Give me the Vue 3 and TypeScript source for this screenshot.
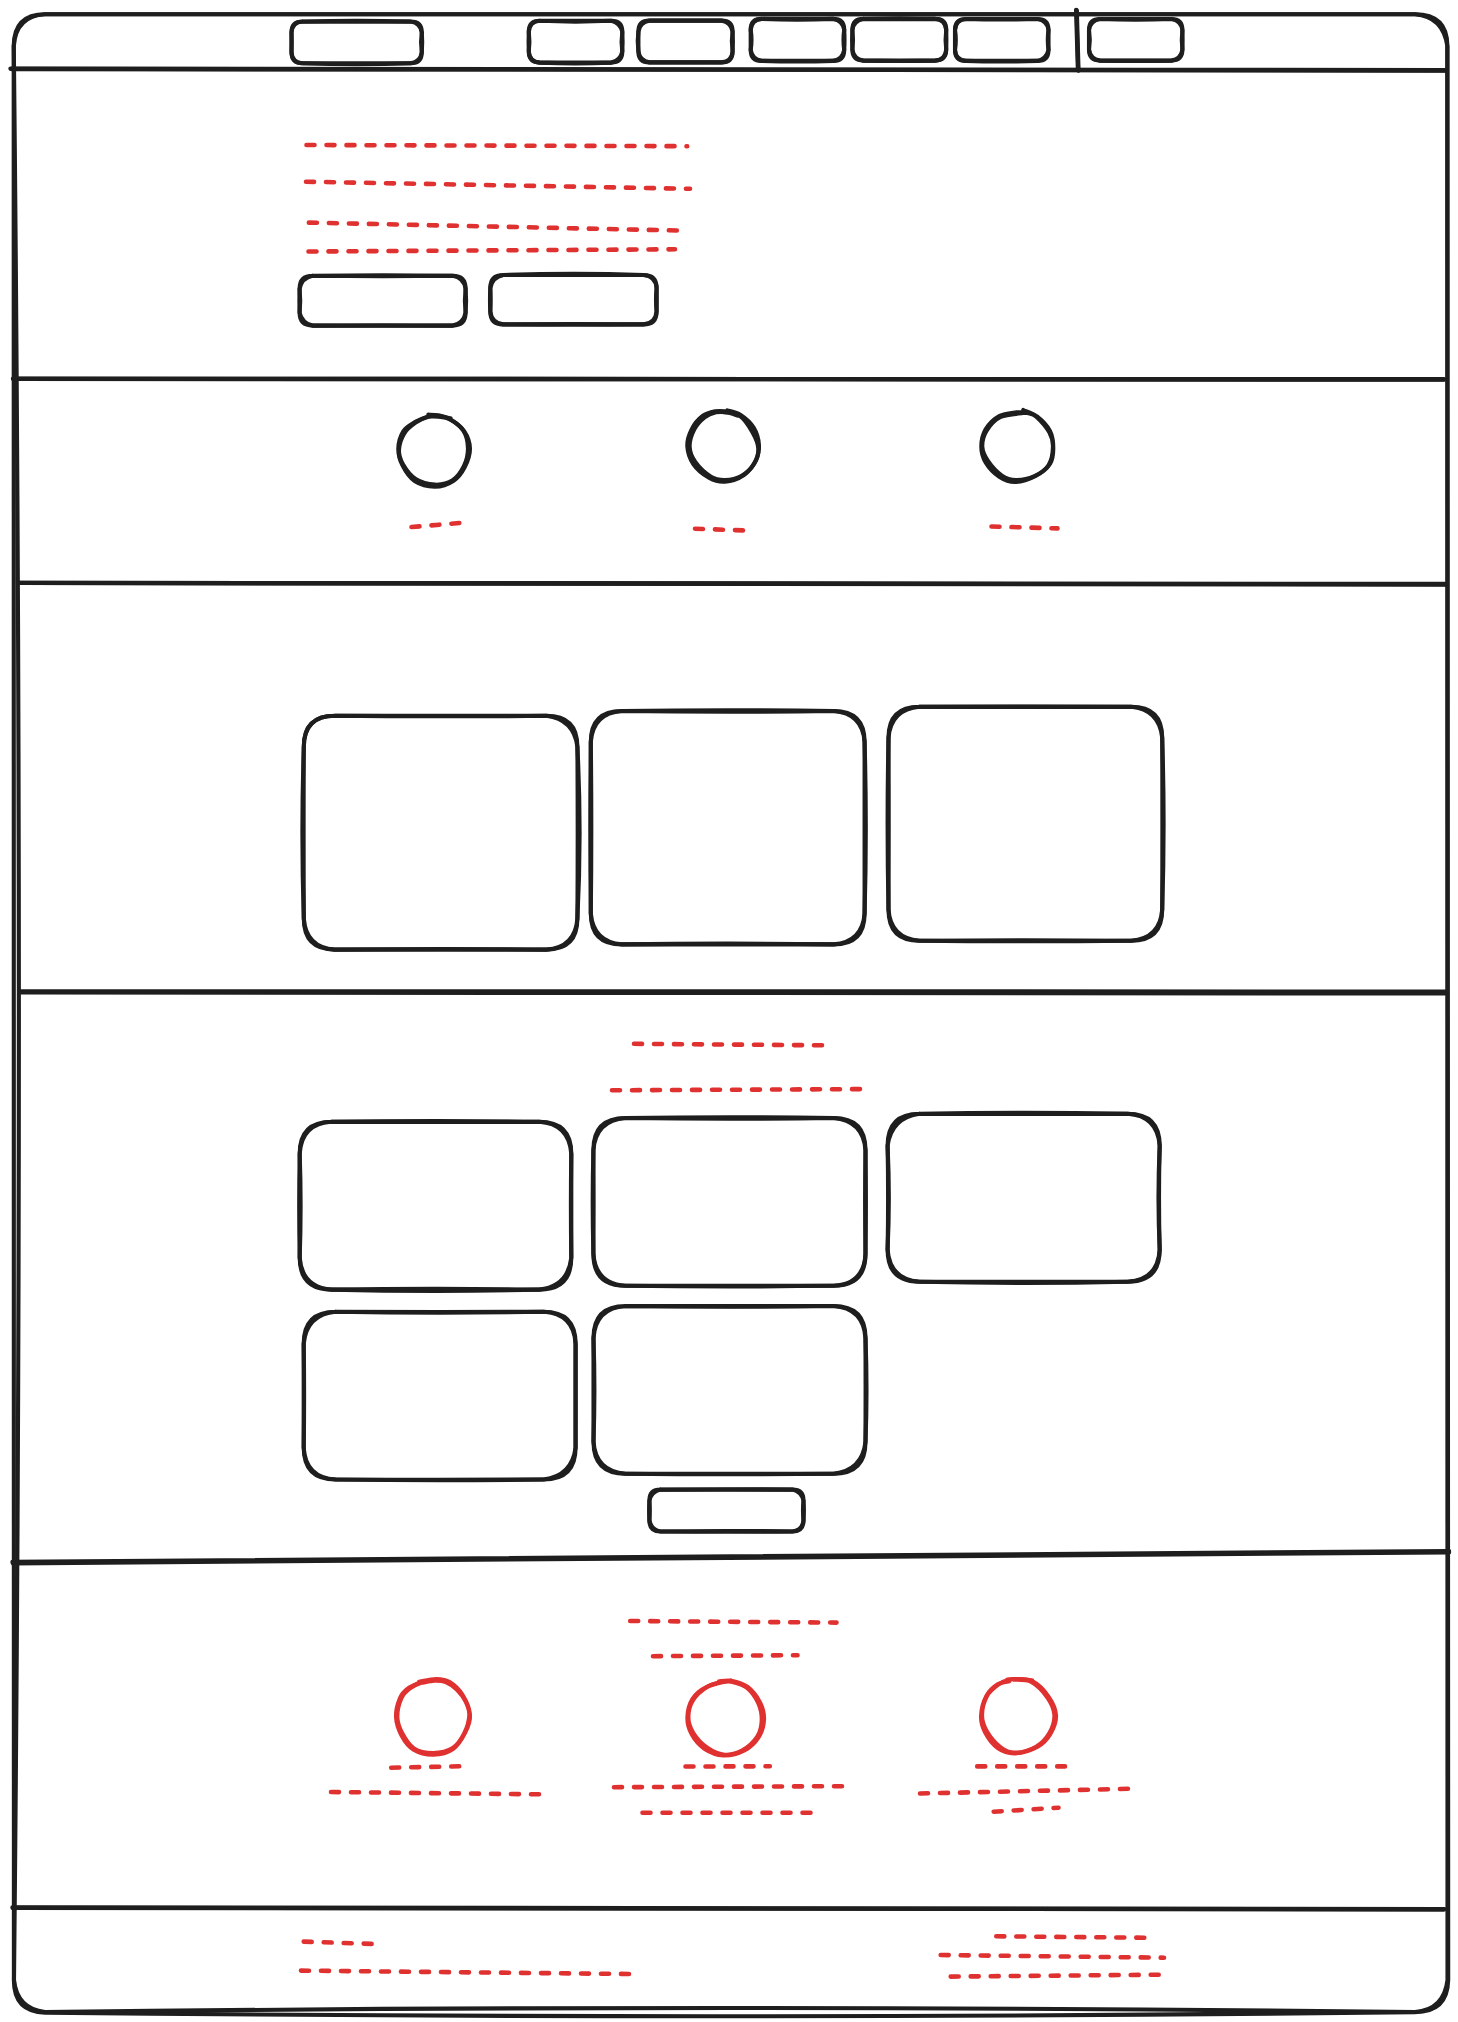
<script setup lang="ts">
type Point = [number, number]
type Line = [number, number, number, number]
type Sides = [number, number, number, number]

/** A rounded box drawn twice by hand; side bows are top, right, bottom, left (outward positive). */
interface Box {
  x1: number
  y1: number
  x2: number
  y2: number
  r: number
  first: Sides
  second: Sides
  /** How far the second stroke cuts inside each corner: tl, tr, br, bl. */
  corners: Sides
}

interface Circle {
  cx: number
  cy: number
  red?: boolean
  strokes: Point[][]
}

interface Section {
  name: string
  tag: string
  top: number
  height: number
  boxes: Box[]
  circles: Circle[]
  dashes: Line[]
  rules: string[]
}

const box = (
  x1: number, y1: number, x2: number, y2: number, r: number,
  first: Sides, second: Sides, corners: Sides,
): Box => ({ x1, y1, x2, y2, r, first, second, corners })

function boxPath(b: Box, bow: Sides, corners: Sides): string {
  const { x1, y1, x2, y2, r } = b
  const [t, e, s, w] = bow.map((n) => n * 2)
  const cut = corners.map((n) => n * 0.7)
  const mx = (x1 + x2) / 2
  const my = (y1 + y2) / 2
  return [
    `M${x1 + r} ${y1}`,
    `Q${mx} ${y1 - t} ${x2 - r} ${y1}`,
    `Q${x2 - cut[1]} ${y1 + cut[1]} ${x2} ${y1 + r}`,
    `Q${x2 + e} ${my} ${x2} ${y2 - r}`,
    `Q${x2 - cut[2]} ${y2 - cut[2]} ${x2 - r} ${y2}`,
    `Q${mx} ${y2 + s} ${x1 + r} ${y2}`,
    `Q${x1 + cut[3]} ${y2 - cut[3]} ${x1} ${y2 - r}`,
    `Q${x1 - w} ${my} ${x1} ${y1 + r}`,
    `Q${x1 + cut[0]} ${y1 + cut[0]} ${x1 + r} ${y1}`,
  ].join('')
}

/** Smooth open curve through points given in thirds of a pixel around a centre. */
function curvePath(c: Circle, raw: Point[]): string {
  const p = raw.map(([x, y]): Point => [c.cx + x / 3, c.cy + y / 3])
  let d = `M${p[0][0]} ${p[0][1]}`
  for (let i = 0; i < p.length - 1; i++) {
    const a = p[Math.max(i - 1, 0)]
    const b = p[i]
    const n = p[i + 1]
    const m = p[Math.min(i + 2, p.length - 1)]
    d += `C${b[0] + (n[0] - a[0]) / 6} ${b[1] + (n[1] - a[1]) / 6} ${n[0] - (m[0] - b[0]) / 6} ${n[1] - (m[1] - b[1]) / 6} ${n[0]} ${n[1]}`
  }
  return d
}

const sections: Section[] = [
  {
    name: 'nav', tag: 'header', top: 0, height: 69, circles: [], dashes: [],
    boxes: [
      box(291.5, 21.5, 421.8, 63.3, 11, [0.7, 0.4, 0.9, 0], [-0.2, -0.8, 0, -0.2], [1, 2, 2, 1]),
      box(528.8, 20.8, 622.3, 62.6, 11, [0, 0.3, 0, 0.2], [-0.8, -0.7, 0.8, -0.6], [1, 3, 3, 1]),
      box(638.4, 20.6, 732.6, 62.4, 11, [0, 0.3, 0, 0.7], [0, -0.8, 0, 0], [2, 2, 1, 2]),
      box(750.7, 18.9, 844.2, 60.9, 11, [0, 0.3, 0.6, 0], [-0.7, -0.7, 0, -0.8], [1, 2, 2, 2]),
      box(852.4, 18.9, 946.2, 60.6, 11, [0.5, 0.2, 0, 0.3], [-0.2, -0.6, 0.4, -0.6], [2, 1, 1, 2]),
      box(955, 19, 1048.5, 60.9, 11, [0, 0, 0.6, 0], [-0.5, -0.7, 0, -0.8], [1, 2, 3, 1]),
      box(1089, 19, 1182.4, 60.6, 11, [0, 0.2, 0, 0], [-0.6, -0.6, 0.3, -0.8], [2, 2, 2, 2]),
    ],
    rules: [
      'M10.5 68.6Q700 69.9 1446 70.6', 'M11.5 69Q700 69.3 1446 70.2',
      'M1076.2 10L1078 70.3', 'M1076.7 10.4L1078.4 70.5',
    ],
  },
  {
    name: 'hero', tag: 'section', top: 69, height: 310, circles: [],
    boxes: [
      box(299.6, 275.8, 465.6, 325.6, 13, [0.6, 0.5, 0.2, 0.2], [-0.4, -0.7, -0.2, -0.6], [3, 2.5, 3, 3.5]),
      box(490.3, 275, 656.6, 324.4, 13, [1.3, 0.2, 0.2, 0.3], [0, -0.6, -0.4, -0.4], [3, 1.5, 1.5, 2]),
    ],
    dashes: [
      [306.5, 145, 687.2, 146.2], [306, 181.7, 690, 188.8],
      [308.9, 222.6, 677, 230.5], [308.5, 251.5, 675, 249.3],
    ],
    rules: ['M13 378.7Q700 378.6 1444 379.6', 'M14 378.9Q700 379.2 1444 379.3'],
  },
  {
    name: 'features', tag: 'section', top: 379, height: 204, boxes: [],
    circles: [
      {
        cx: 434.3, cy: 450,
        strokes: [
          [[-18, -106], [12, -104], [47, -92], [90, -56], [107, -4], [91, 52], [58, 92], [2, 110], [-59, 93], [-95, 47], [-108, -4], [-93, -56], [-59, -83], [-23, -99]],
          [[-13, -101], [42, -94], [87, -58], [101, -5], [89, 48], [55, 91], [2, 104], [-56, 87], [-94, 43], [-106, 0], [-90, -50], [-56, -82], [-20, -99], [17, -101], [49, -95]],
        ],
      },
      {
        cx: 723.3, cy: 446,
        strokes: [
          [[12, -107], [52, -93], [91, -55], [107, -3], [97, 44], [62, 87], [5, 107], [-43, 95], [-90, 54], [-108, 0], [-95, -50], [-62, -90], [-24, -104], [10, -104]],
          [[-5, -102], [50, -90], [87, -42], [105, 7], [93, 53], [54, 90], [5, 102], [-37, 92], [-84, 48], [-101, 2], [-87, -50], [-56, -86], [-22, -101], [8, -101], [45, -91]],
        ],
      },
      {
        cx: 1017.3, cy: 446,
        strokes: [
          [[18, -108], [60, -88], [98, -45], [108, 7], [98, 54], [55, 90], [-6, 108], [-54, 92], [-95, 49], [-108, 2], [-95, -50], [-54, -90], [-2, -101], [25, -102]],
          [[32, -99], [57, -88], [96, -41], [107, 2], [94, 57], [50, 91], [-4, 102], [-46, 89], [-88, 45], [-105, 2], [-92, -46], [-50, -87], [18, -99], [32, -100]],
        ],
      },
    ],
    dashes: [
      [411.5, 527, 459.5, 523], [695, 528.7, 743.2, 530.4], [991.5, 526.5, 1057.5, 528.4],
    ],
    rules: ['M19 582.9Q700 583.2 1447 584.6', 'M19 582.9Q700 584 1447 584'],
  },
  {
    name: 'cards', tag: 'section', top: 583, height: 409, circles: [], dashes: [],
    boxes: [
      box(303.8, 715.8, 577.4, 949.6, 31, [0, 2.2, 0, 1.4], [-0.5, 0.3, -0.6, 0.2], [0, 5, 3, 3]),
      box(590.8, 711, 864.6, 944.4, 31, [0.8, 1.2, 0, 0.5], [-0.8, 0, -0.8, -0.5], [3, 3, 3, 3.5]),
      box(888.5, 706.7, 1162.2, 940.7, 31, [0.2, 1.4, 0.6, 0.9], [-0.2, 0.2, -0.4, -0.2], [3.5, 4, 3, 3]),
    ],
    rules: ['M21 991.4Q700 991 1447 991.6', 'M21 992.4Q700 993.4 1447 993.3'],
  },
  {
    name: 'gallery', tag: 'section', top: 992, height: 565, circles: [],
    boxes: [
      box(299.7, 1121.8, 571.3, 1289.6, 32, [0.7, 0, 1.3, 0.5], [-0.1, -0.4, -0.8, -0.9], [2.5, 3, 4.5, 3]),
      box(593.4, 1118, 865.5, 1285.8, 32, [0.7, 0.4, 0.6, 0.7], [-0.8, -0.4, 0, -0.2], [3.5, 3.5, 2, 3]),
      box(887.6, 1113.7, 1159.7, 1281.7, 32, [0.8, -0.7, 1.2, -0.5], [-0.3, -1.2, 0, -1.2], [5.5, 3, 2.5, 3]),
      box(303.7, 1311.8, 575.6, 1479.5, 32, [-0.2, 0.1, 0.8, 0], [-0.9, -0.1, 0.2, -0.4], [4, 2.5, 5, 2.5]),
      box(593.5, 1306, 865.5, 1473.7, 32, [-0.1, 1, 0.6, 0], [-0.8, 0.1, 0, -0.9], [3, 3, 4.5, 3]),
      box(649.4, 1489.6, 803.5, 1531.5, 11, [0.3, 0.4, 0.2, 0.3], [-0.1, -0.5, -0.5, -0.4], [3, 3, 1.5, 2.5]),
    ],
    dashes: [[634, 1043.8, 822, 1045.3], [612, 1090.3, 861, 1089.1]],
    rules: ['M12.5 1562L1449 1551.1', 'M13 1563.2Q700 1559 1449 1552.2'],
  },
  {
    name: 'team', tag: 'section', top: 1557, height: 351, boxes: [],
    circles: [
      {
        cx: 433, cy: 1716.7, red: true,
        strokes: [
          [[-42, -105], [10, -113], [50, -104], [89, -65], [111, -5], [97, 47], [60, 97], [1, 114], [-58, 99], [-94, 57], [-111, 0], [-99, -56], [-76, -84], [-36, -104]],
          [[-30, -102], [5, -108], [38, -104], [72, -81], [98, -45], [109, -5], [93, 51], [59, 94], [1, 109], [-57, 95], [-93, 48], [-107, 0], [-95, -55], [-70, -84], [-30, -104], [5, -109], [38, -108]],
        ],
      },
      {
        cx: 725.7, cy: 1717.7, red: true,
        strokes: [
          [[-20, -109], [17, -111], [65, -93], [103, -46], [115, 5], [99, 58], [56, 98], [-7, 113], [-64, 93], [-102, 50], [-115, 0], [-100, -56], [-58, -92], [15, -112]],
          [[-15, -107], [17, -108], [63, -90], [97, -45], [108, 7], [95, 56], [50, 98], [-2, 111], [-54, 91], [-97, 46], [-112, -3], [-97, -54], [-55, -93], [-10, -109]],
        ],
      },
      {
        cx: 1018.7, cy: 1716, red: true,
        strokes: [
          [[-34, -109], [-10, -111], [42, -104], [89, -59], [112, -3], [95, 54], [57, 92], [-11, 112], [-63, 96], [-101, 49], [-113, 0], [-97, -60], [-63, -95], [-28, -104]],
          [[-15, -109], [38, -102], [87, -54], [107, -3], [92, 51], [52, 92], [-11, 110], [-54, 94], [-96, 45], [-110, -3], [-95, -60], [-60, -95], [-30, -109], [0, -111], [40, -107]],
        ],
      },
    ],
    dashes: [
      [630.2, 1621, 836.5, 1622.6], [653, 1656.2, 797.5, 1655.2],
      [391.2, 1767.7, 459.5, 1766.3], [331, 1792, 539, 1794.3],
      [685.5, 1766.5, 769.8, 1766.3], [614, 1787.2, 842, 1786.2], [642.5, 1812.7, 811, 1812.7],
      [977.2, 1766.4, 1065, 1766.4], [920, 1793.5, 1128, 1788.8], [993.7, 1811.7, 1058.5, 1807.7],
    ],
    rules: ['M12.5 1907.4Q700 1907.6 1444 1909.3', 'M13 1907.9Q700 1909 1444 1909.3'],
  },
  {
    name: 'footer', tag: 'footer', top: 1908, height: 114, boxes: [], circles: [], rules: [],
    dashes: [
      [303.7, 1941.6, 371.6, 1943.9], [301, 1970.6, 629.5, 1974],
      [996.3, 1936.3, 1144.5, 1937.7], [940.7, 1955, 1164, 1957.7], [950.7, 1976.6, 1158.8, 1974.7],
    ],
  },
]

const frame = [
  'M45 14.3L1415 14.3Q1447.3 14.3 1447.4 46L1448.2 1980Q1447.5 2012 1415 2012.2Q730 2020 45 2012.6Q13.7 2011.5 13.9 1980L13.7 46Q14 14.3 45 14.3',
  'M45 14.3L1415 14.3Q1443 16.5 1447.3 46L1447.5 1980Q1444 2010 1415 2012Q730 2004 45 2012Q17 2009 14 1980C20.5 1340 20.5 690 13.8 46Q16 16 45 14.3',
]
</script>

<template>
  <main class="page">
    <component :is="s.tag" v-for="s in sections" :key="s.name" class="section">
      <svg class="sketch" width="1458" :height="s.height" :viewBox="`0 ${s.top} 1458 ${s.height}`">
        <path v-for="(d, i) in s.rules" :key="`r${i}`" class="ink rule" :d="d" />
        <template v-for="(b, i) in s.boxes" :key="`b${i}`">
          <path class="ink" :d="boxPath(b, b.first, [0, 0, 0, 0])" />
          <path class="ink" :d="boxPath(b, b.second, b.corners)" />
        </template>
        <template v-for="(c, i) in s.circles" :key="`c${i}`">
          <path
            v-for="(points, j) in c.strokes"
            :key="j"
            class="ink"
            :class="{ red: c.red }"
            :d="curvePath(c, points)"
          />
        </template>
        <line
          v-for="(l, i) in s.dashes"
          :key="`d${i}`"
          class="ink red dashed"
          :x1="l[0]"
          :y1="l[1]"
          :x2="l[2]"
          :y2="l[3]"
        />
      </svg>
    </component>
    <svg class="frame" width="1458" height="2022" viewBox="0 0 1458 2022">
      <path v-for="(d, i) in frame" :key="i" class="ink" :d="d" />
    </svg>
  </main>
</template>

<style>
body {
  margin: 0;
  background: #fff;
}
</style>

<style scoped>
.page {
  position: relative;
  display: flex;
  flex-direction: column;
  width: 1458px;
  height: 2022px;
  overflow: hidden;
  background: #fff;
}

.section {
  display: block;
  flex: none;
}

.sketch {
  display: block;
  overflow: visible;
}

.frame {
  position: absolute;
  inset: 0;
  pointer-events: none;
}

.ink {
  fill: none;
  stroke: #1e1e1e;
  stroke-width: 4.1;
  stroke-linecap: round;
  stroke-linejoin: round;
}

.rule {
  stroke-width: 4.4;
}

.red {
  stroke: #e03131;
}

.dashed {
  stroke-width: 4.6;
  stroke-dasharray: 8 12;
}
</style>
